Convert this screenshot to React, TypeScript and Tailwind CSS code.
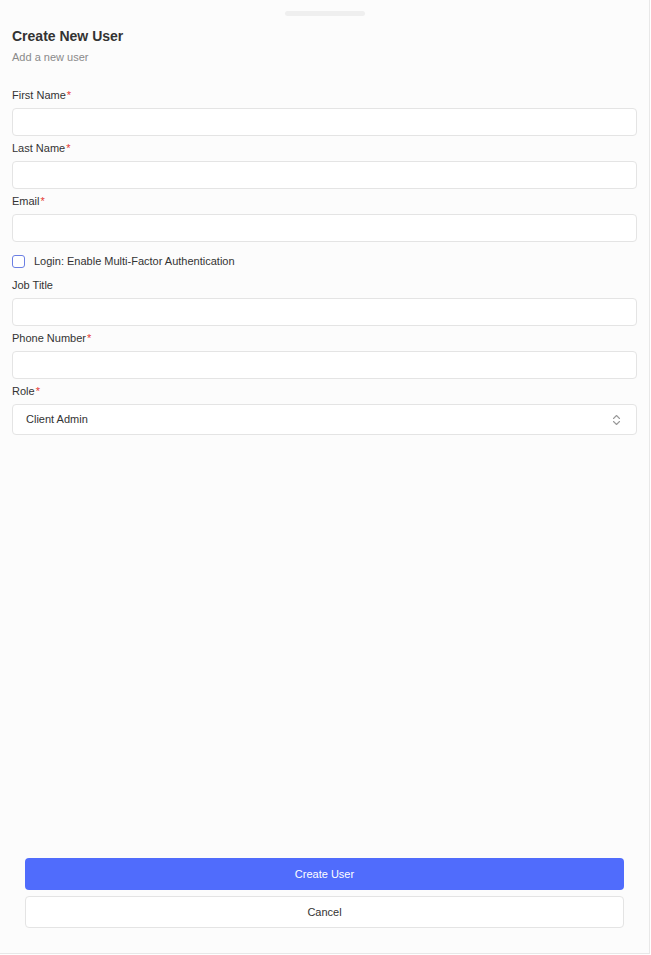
import React from "react";

function Field({ label, required, select }: { label: string; required?: boolean; select?: boolean }) {
  return (
    <div className="flex flex-col gap-[6px]">
      <div className="text-[11px] leading-[14px] text-[#333333]">
        {label}
        {required && <span className="text-[#e53935] ml-[1px]">*</span>}
      </div>
      {select ? (
        <div className="h-[31px] rounded-[4px] border border-[#e4e4e4] bg-white flex items-center justify-between pl-[13px] pr-[15px]">
          <span className="text-[11px] text-[#333333]">Client Admin</span>
          <svg width="9" height="12" viewBox="0 0 9 12" fill="none" stroke="#9a9a9a" strokeWidth="1.1" strokeLinecap="round" strokeLinejoin="round">
            <path d="M1.5 4.5 L4.5 1.5 L7.5 4.5" />
            <path d="M1.5 7.5 L4.5 10.5 L7.5 7.5" />
          </svg>
        </div>
      ) : (
        <div className="h-[28px] rounded-[4px] border border-[#e4e4e4] bg-white" />
      )}
    </div>
  );
}

export default function App() {
  return (
    <div
      className="w-[650px] h-[954px] bg-[#fcfcfc] border-r border-b border-[#e8e8e8] flex flex-col"
      style={{ fontFamily: '"Liberation Sans", Arial, sans-serif' }}
    >
      <div className="flex justify-center pt-[11px]">
        <div className="w-[80px] h-[5px] rounded-full bg-[#efefef]" />
      </div>
      <div className="px-3 flex flex-col flex-1">
        <div className="mt-[12px] text-[14px] leading-[17px] font-bold text-[#333333]">Create New User</div>
        <div className="mt-[5px] text-[11px] leading-[14px] text-[#8a8a8a]">Add a new user</div>
        <div className="mt-[24px] flex flex-col gap-[5px]">
          <Field label="First Name" required />
          <Field label="Last Name" required />
          <Field label="Email" required />
        </div>
        <div className="mt-[13px] flex items-center gap-[9px] h-[13px]">
          <div className="w-[13px] h-[13px] rounded-[3px] border border-[#6b7fe3] bg-white" />
          <span className="text-[11px] text-[#333333]">Login: Enable Multi-Factor Authentication</span>
        </div>
        <div className="mt-[10px] flex flex-col gap-[5px]">
          <Field label="Job Title" />
          <Field label="Phone Number" required />
          <Field label="Role" required select />
        </div>
        <div className="flex-1" />
      </div>
      <div className="px-[25px] pb-[25px] flex flex-col gap-[6px]">
        <button className="h-[32px] rounded-[4px] bg-[#506cfc] text-white text-[11px]">Create User</button>
        <button className="h-[32px] rounded-[4px] border border-[#e4e4e4] bg-white text-[#333333] text-[11px]">Cancel</button>
      </div>
    </div>
  );
}
